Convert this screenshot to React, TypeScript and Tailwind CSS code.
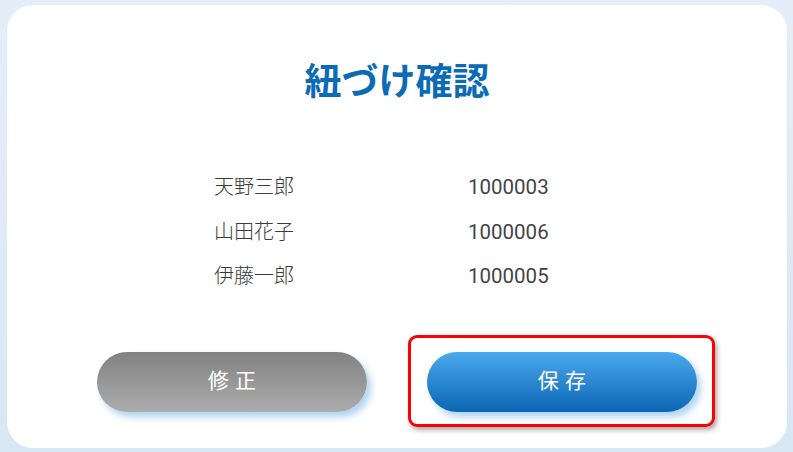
const rows = [
  { name: "天野三郎", code: "1000003" },
  { name: "山田花子", code: "1000006" },
  { name: "伊藤一郎", code: "1000005" },
];

const jp = "font-['Roboto','Noto_Sans_CJK_JP',sans-serif]";

export default function App() {
  return (
    <div className="h-[452px] w-[793px] overflow-hidden bg-gradient-to-b from-[#e4eef8] to-[#d7e7f4] pl-[7px] pr-[6px] pt-[5px]">
      <div className={`flex h-[443px] flex-col rounded-[26px] bg-white ${jp}`}>
        <h1 className="pt-[56px] text-center text-[37px] font-bold leading-[43px] text-[#0b6bb6]">
          紐づけ確認
        </h1>

        <div className="ml-[207px] mt-[61px] grid w-[360px] grid-cols-[254px_auto] text-[20px] leading-[44.5px] text-[#444]">
          {rows.map((row) => (
            <div key={row.code} className="contents">
              <span className="font-light text-[#3a3a3a]">{row.name}</span>
              <span className="text-[20.5px]">{row.code}</span>
            </div>
          ))}
        </div>

        <div className="mt-[53px] flex justify-center gap-[60px]">
          <button
            type="button"
            className="h-[60px] w-[270px] rounded-full bg-gradient-to-b from-[#828282] to-[#acacac] pl-[6px] text-[21px] tracking-[0.3em] text-white shadow-[4px_5px_7px_rgba(110,175,225,0.55)]"
          >
            修正
          </button>
          <div className="relative">
            <div className="absolute -bottom-[15px] -left-[19px] -right-[18px] -top-[17px] rounded-[9px] border-[3px] border-[#ff0000] shadow-[2px_3px_5px_rgba(0,0,0,0.35)]" />
            <button
              type="button"
              className="relative h-[60px] w-[270px] rounded-full bg-gradient-to-b from-[#49a9ed] to-[#0866b4] pl-[6px] text-[21px] tracking-[0.3em] text-white shadow-[4px_5px_7px_rgba(110,175,225,0.55)]"
            >
              保存
            </button>
          </div>
        </div>
      </div>
    </div>
  );
}
